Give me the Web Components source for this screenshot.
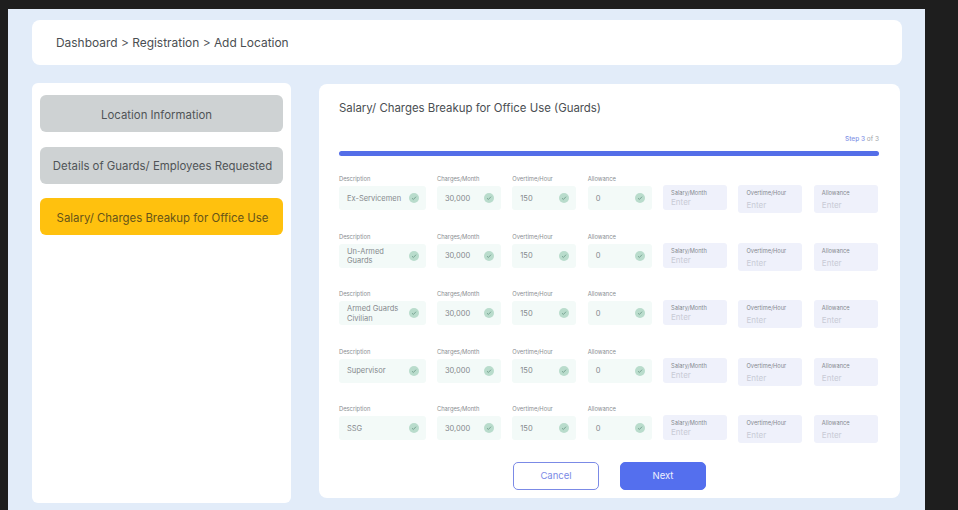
<!DOCTYPE html>
<html>
<head>
<meta charset="utf-8">
<title>Add Location</title>
<style>
  html, body { margin: 0; height: 510px; overflow: hidden; background: #1e1e1e; }
  body { font-family: "Inter", "Liberation Sans", sans-serif; }
</style>
</head>
<body>
<app-shell>
  <bread-crumb slot="top">Dashboard &gt; Registration &gt; Add Location</bread-crumb>
  <step-nav slot="side">
    <nav-item first>Location Information</nav-item>
    <nav-item>Details of Guards/ Employees Requested</nav-item>
    <nav-item active>Salary/ Charges Breakup for Office Use</nav-item>
  </step-nav>
  <charges-form slot="main" heading="Salary/ Charges Breakup for Office Use (Guards)">
    <charges-row description="Ex-Servicemen"></charges-row>
    <charges-row description="Un-Armed Guards"></charges-row>
    <charges-row description="Armed Guards Civilian"></charges-row>
    <charges-row description="Supervisor"></charges-row>
    <charges-row description="SSG"></charges-row>
  </charges-form>
</app-shell>

<script>
class AppShell extends HTMLElement {
  constructor() {
    super();
    this.attachShadow({ mode: "open" });
    this.shadowRoot.innerHTML = `
      <style>
        :host { display: block; box-sizing: border-box; width: 917px; height: 501px; margin: 9px 0 0 8px; padding: 11px 23px 0 24px; background: #e2ecf9; overflow: hidden; }
        .columns { display: flex; align-items: flex-start; gap: 28px; margin-top: 18px; }
      </style>
      <slot name="top"></slot>
      <div class="columns">
        <slot name="side"></slot>
        <slot name="main"></slot>
      </div>`;
  }
}
customElements.define("app-shell", AppShell);

class BreadCrumb extends HTMLElement {
  constructor() {
    super();
    this.attachShadow({ mode: "open" });
    this.shadowRoot.innerHTML = `
      <style>
        :host { display: flex; align-items: center; box-sizing: border-box; height: 45px; padding-left: 24px; background: #fff; border-radius: 8px; font-size: 11.95px; color: #4a4e52; }
      </style>
      <slot></slot>`;
  }
}
customElements.define("bread-crumb", BreadCrumb);

class StepNav extends HTMLElement {
  constructor() {
    super();
    this.attachShadow({ mode: "open" });
    this.shadowRoot.innerHTML = `
      <style>
        :host { display: flex; flex-direction: column; gap: 14.5px; box-sizing: border-box; width: 259px; height: 420px; padding: 12px 8px; background: #fff; border-radius: 6px; }
      </style>
      <slot></slot>`;
  }
}
customElements.define("step-nav", StepNav);

class NavItem extends HTMLElement {
  constructor() {
    super();
    this.attachShadow({ mode: "open" });
    this.shadowRoot.innerHTML = `
      <style>
        :host { display: flex; align-items: center; justify-content: center; box-sizing: border-box; height: 37px; padding: 2px 0 0 2px; border-radius: 6px; background: #ced2d3; color: #505457; font-size: 11.4px; white-space: nowrap; }
        :host([first]) { padding: 2px 10px 0 0; }
        :host([active]) { background: #ffc10e; color: #665419; }
      </style>
      <slot></slot>`;
  }
}
customElements.define("nav-item", NavItem);

class ChargesForm extends HTMLElement {
  constructor() {
    super();
    this.attachShadow({ mode: "open" });
    this.shadowRoot.innerHTML = `
      <style>
        :host { display: block; box-sizing: border-box; width: 581px; height: 414px; margin-top: 1px; padding: 17px 21px 0 20px; background: #fff; border-radius: 8px; }
        h1 { margin: 0; font-size: 11.4px; line-height: 15px; font-weight: 400; color: #4a4e52; }
        .step { margin-top: 18.5px; font-size: 6.5px; line-height: 8px; text-align: right; color: #a0a3a8; }
        .step b { font-weight: 500; color: #7f92e6; }
        .bar { height: 5.5px; margin: 8px 0 18px; border-radius: 3px; background: #546ee8; }
        .rows { display: flex; flex-direction: column; gap: 22.5px; }
        .actions { display: flex; gap: 21px; margin: 22.5px 0 0 174px; }
      </style>
      <h1></h1>
      <div class="step"><b>Step 3</b> of 3</div>
      <div class="bar"></div>
      <div class="rows"><slot></slot></div>
      <div class="actions">
        <form-button>Cancel</form-button>
        <form-button primary>Next</form-button>
      </div>`;
  }
  connectedCallback() {
    this.shadowRoot.querySelector("h1").textContent = this.getAttribute("heading");
  }
}
customElements.define("charges-form", ChargesForm);

class ChargesRow extends HTMLElement {
  constructor() {
    super();
    this.attachShadow({ mode: "open" });
    this.shadowRoot.innerHTML = `
      <style>
        :host { display: grid; grid-template-columns: 86.5px repeat(6, 64px); column-gap: 11.4px; height: 35px; align-items: start; }
      </style>
      <check-field class="d" label="Description"></check-field>
      <check-field label="Charges/Month" value="30,000"></check-field>
      <check-field label="Overtime/Hour" value="150"></check-field>
      <check-field label="Allowance" value="0"></check-field>
      <enter-field label="Salary/Month" short></enter-field>
      <enter-field label="Overtime/Hour"></enter-field>
      <enter-field label="Allowance"></enter-field>`;
  }
  connectedCallback() {
    this.shadowRoot.querySelector(".d").setAttribute("value", this.getAttribute("description"));
  }
}
customElements.define("charges-row", ChargesRow);

class CheckField extends HTMLElement {
  static get observedAttributes() {
    return ["value"];
  }
  constructor() {
    super();
    this.attachShadow({ mode: "open" });
    this.shadowRoot.innerHTML = `
      <style>
        :host { display: block; }
        .l { box-sizing: border-box; height: 12px; padding-top: 1px; font-size: 5.8px; line-height: 8px; color: #8a8e92; white-space: nowrap; }
        .box { display: flex; align-items: center; justify-content: space-between; box-sizing: border-box; height: 24px; padding: 0 7px 0 8px; border-radius: 3px; background: #f3faf8; }
        .v { padding-top: 1px; font-size: 7.5px; line-height: 9.5px; color: #85898d; }
        svg { flex: none; width: 10px; height: 10px; }
      </style>
      <div class="l"></div>
      <div class="box">
        <span class="v"></span>
        <svg viewBox="0 0 10 10"><circle cx="5" cy="5" r="5" fill="#b9dccc"/><path d="M3 5.2 4.4 6.5 7 3.7" fill="none" stroke="#7aa594" stroke-width="1"/></svg>
      </div>`;
  }
  connectedCallback() {
    this.shadowRoot.querySelector(".l").textContent = this.getAttribute("label");
  }
  attributeChangedCallback(name, oldValue, newValue) {
    if (name == "value") {
      this.shadowRoot.querySelector(".v").textContent = newValue;
    }
  }
}
customElements.define("check-field", CheckField);

class EnterField extends HTMLElement {
  constructor() {
    super();
    this.attachShadow({ mode: "open" });
    this.shadowRoot.innerHTML = `
      <style>
        :host { display: block; box-sizing: border-box; height: 28px; margin-top: 11px; padding: 4px 8px 0; border-radius: 3px; background: #eff1fb; }
        :host([short]) { height: 25px; }
        .l { font-size: 5.7px; line-height: 8px; color: #85898f; white-space: nowrap; }
        .e { font-size: 8px; line-height: 10px; margin-top: 3px; color: #c8cbd6; }
        :host([short]) .e { margin-top: 0; }
      </style>
      <div class="l"></div>
      <div class="e">Enter</div>`;
  }
  connectedCallback() {
    this.shadowRoot.querySelector(".l").textContent = this.getAttribute("label");
  }
}
customElements.define("enter-field", EnterField);

class FormButton extends HTMLElement {
  constructor() {
    super();
    this.attachShadow({ mode: "open" });
    this.shadowRoot.innerHTML = `
      <style>
        :host { display: flex; align-items: center; justify-content: center; box-sizing: border-box; width: 86px; height: 28px; border: 1px solid #7b8ae6; border-radius: 5px; background: #fff; color: #7b8ae6; font-size: 9.5px; }
        :host([primary]) { background: #546fee; border-color: #546fee; color: #eef1ff; }
      </style>
      <slot></slot>`;
  }
}
customElements.define("form-button", FormButton);
</script>
</body>
</html>
